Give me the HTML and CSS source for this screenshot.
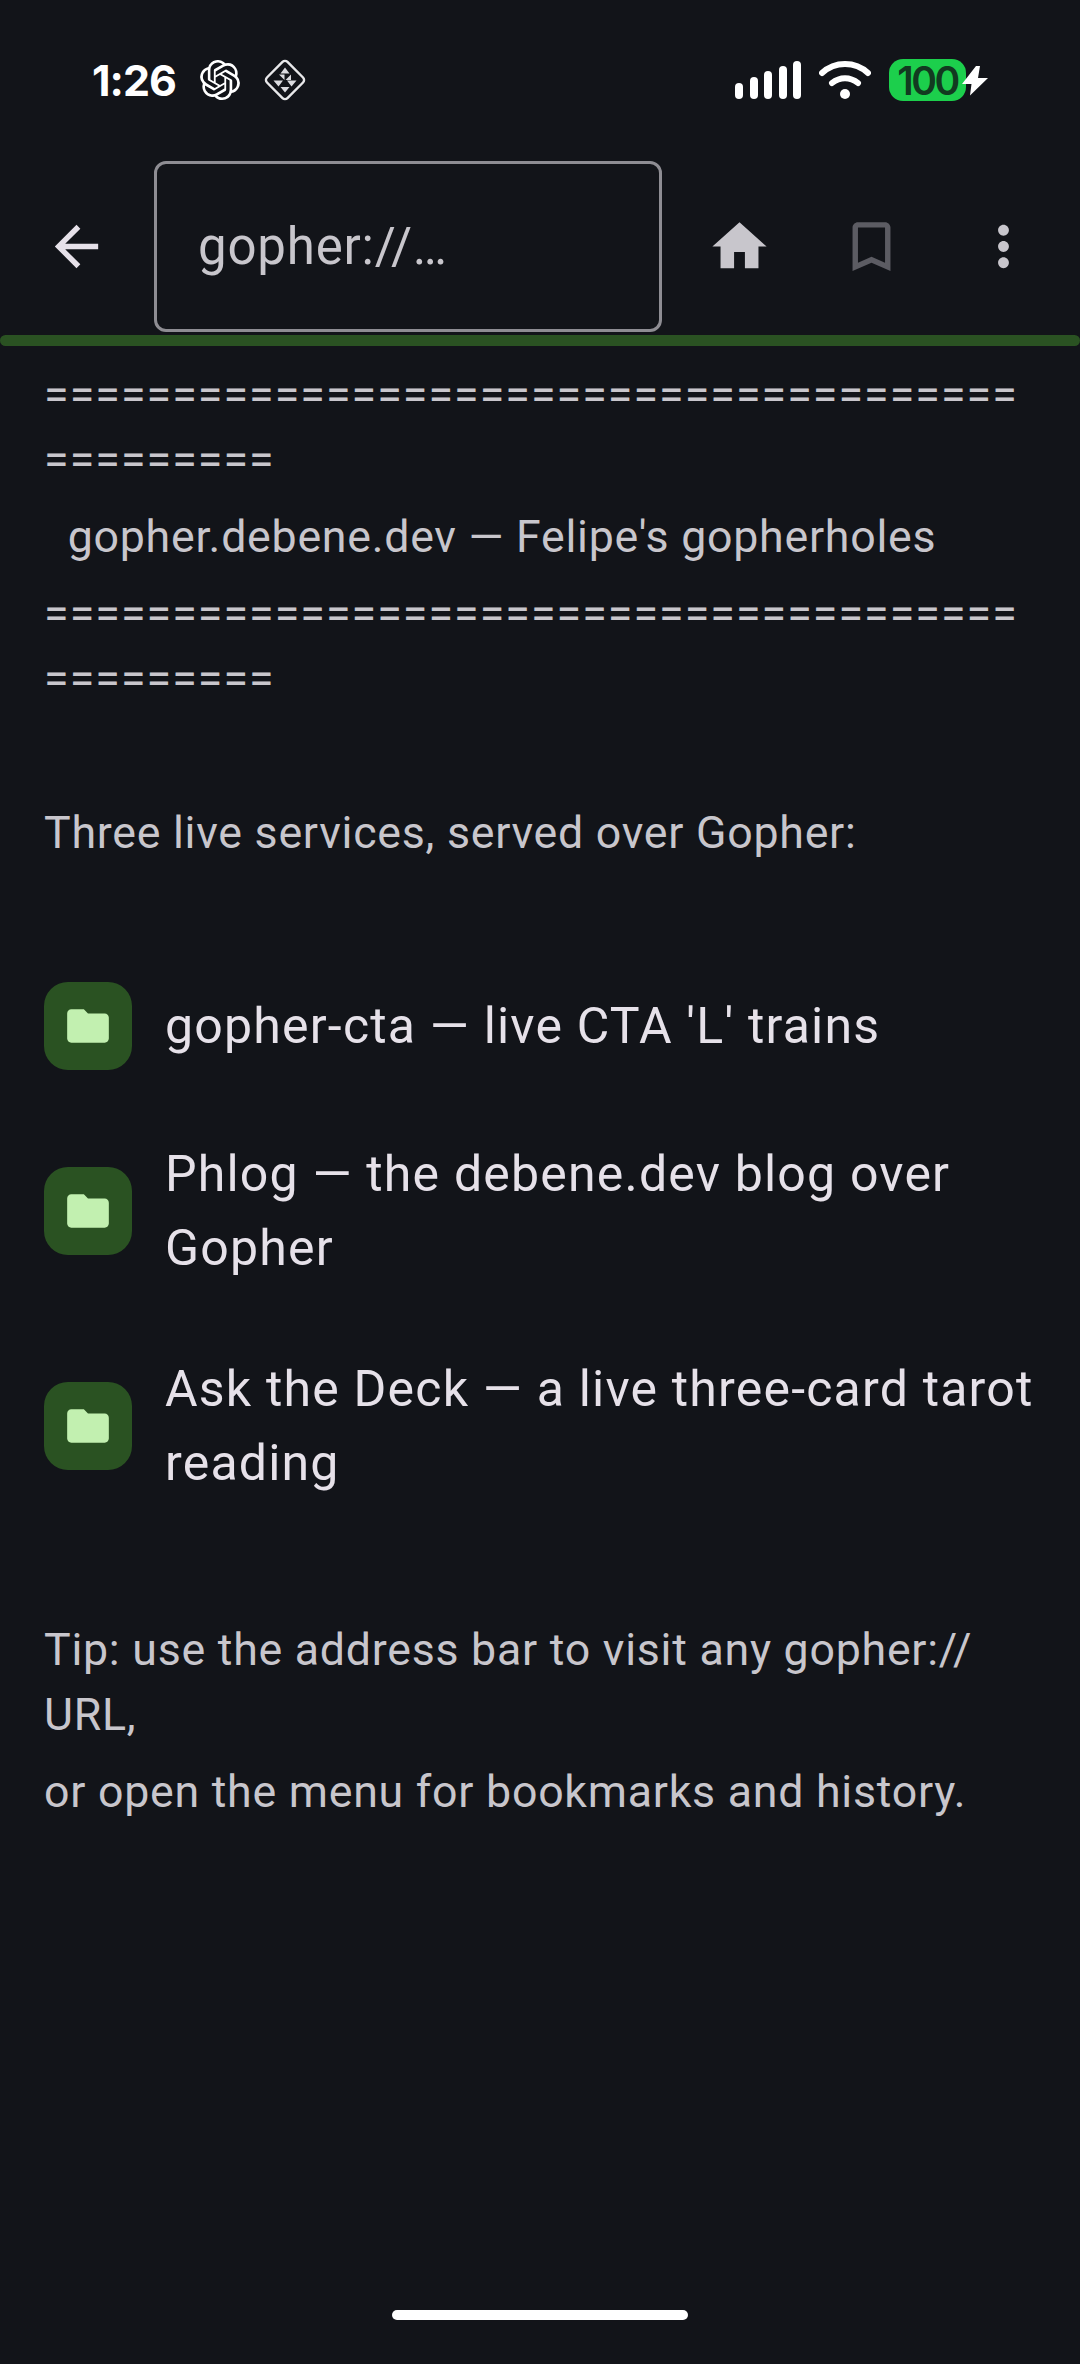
FILE: index.html
```html
<!DOCTYPE html>
<html lang="en">
<head>
  <meta charset="UTF-8" />
  <title>Gopher browser</title>
  <meta name="viewport" content="width=device-width, initial-scale=1.0"/>
  <link rel="stylesheet" href="styles.css">
</head>
<body>
  <div class="status-bar">
    <div class="status-left">
      <span class="time">1:26</span>
      <svg class="openai-icon" viewBox="0 0 24 24"><path fill="#fff" d="M22.2819 9.8211a5.9847 5.9847 0 0 0-.5157-4.9108 6.0462 6.0462 0 0 0-6.5098-2.9A6.0651 6.0651 0 0 0 4.9807 4.1818a5.9847 5.9847 0 0 0-3.9977 2.9 6.0462 6.0462 0 0 0 .7427 7.0966 5.9847 5.9847 0 0 0 .511 4.9107 6.051 6.051 0 0 0 6.5146 2.9001A5.9847 5.9847 0 0 0 13.2599 24a6.0557 6.0557 0 0 0 5.7718-4.2058 5.9894 5.9894 0 0 0 3.9977-2.9001 6.0557 6.0557 0 0 0-.7475-7.0729zm-9.022 12.6081a4.4755 4.4755 0 0 1-2.8764-1.0408l.1419-.0804 4.7783-2.7582a.7948.7948 0 0 0 .3927-.6813v-6.7369l2.02 1.1686a.071.071 0 0 1 .038.052v5.5826a4.504 4.504 0 0 1-4.4945 4.4944zm-9.6607-4.1254a4.4708 4.4708 0 0 1-.5346-3.0137l.142.0852 4.783 2.7582a.7712.7712 0 0 0 .7806 0l5.8428-3.3685v2.3324a.0804.0804 0 0 1-.0332.0615L9.74 19.9502a4.4992 4.4992 0 0 1-6.1408-1.6464zM2.3408 7.8956a4.485 4.485 0 0 1 2.3655-1.9728V11.6a.7664.7664 0 0 0 .3879.6765l5.8144 3.3543-2.0201 1.1685a.0757.0757 0 0 1-.071 0l-4.8303-2.7865A4.504 4.504 0 0 1 2.3408 7.872zm16.5963 3.8558L13.1038 8.364 15.1192 7.2a.0757.0757 0 0 1 .071 0l4.8303 2.7913a4.4944 4.4944 0 0 1-.6765 8.1042v-5.6772a.79.79 0 0 0-.407-.667zm2.0107-3.0231l-.142-.0852-4.7735-2.7818a.7759.7759 0 0 0-.7854 0L9.409 9.2297V6.8974a.0662.0662 0 0 1 .0284-.0615l4.8303-2.7866a4.4992 4.4992 0 0 1 6.6802 4.66zM8.3065 12.863l-2.02-1.1638a.0804.0804 0 0 1-.038-.0567V6.0742a4.4992 4.4992 0 0 1 7.3757-3.4537l-.142.0805L8.704 5.459a.7948.7948 0 0 0-.3927.6813zm1.0976-2.3654l2.602-1.4998 2.6069 1.4998v2.9994l-2.5974 1.4997-2.6067-1.4997Z"/></svg>
      <svg class="diamond-icon" viewBox="0 0 42 42">
        <rect x="6.500" y="6.500" width="29" height="29" rx="3.500" transform="rotate(45 21 21)" fill="none" stroke="#e8e8ea" stroke-width="2.400"/>
        <path fill="#dcdce0" d="M21 8.500l4.500 6h-9zM15 15.500h5.500v5.500zM27 15.500v5.500h-5.500zM9.500 21.500h9.500l-4.500 6zM32.500 21.500H23l4.500 6zM16.500 28h9L21 33.500z"/>
      </svg>
    </div>
    <div class="status-right">
      <div class="signal">
        <span class="bar bar1"></span>
        <span class="bar bar2"></span>
        <span class="bar bar3"></span>
        <span class="bar bar4"></span>
        <span class="bar bar5"></span>
      </div>
      <svg class="wifi-icon" viewBox="0 0 52 40">
        <path d="M3 13C16 1 36 1 49 13" fill="none" stroke="#fff" stroke-width="6" stroke-linecap="round"/>
        <path d="M13 23c8-6.500 18-6.500 26 0" fill="none" stroke="#fff" stroke-width="6" stroke-linecap="round"/>
        <circle cx="26" cy="34" r="5" fill="#fff"/>
      </svg>
      <div class="battery">
        <span class="battery-level">100</span>
        <svg class="bolt-icon" viewBox="0 0 26 30"><path fill="#fff" d="M14 0L0 18h9.500L8 29.500 26 12H16L18 0z"/></svg>
      </div>
    </div>
  </div>

  <div class="toolbar">
    <button class="icon-btn back-btn">
      <svg viewBox="0 0 24 24"><path d="M20 11H7.830l5.590-5.590L12 4l-8 8 8 8 1.410-1.410L7.830 13H20v-2z"/></svg>
    </button>
    <div class="address">gopher://…</div>
    <button class="icon-btn home-btn">
      <svg viewBox="0 0 24 24"><path d="M10 20v-6h4v6h5v-8h3L12 3 2 12h3v8z"/></svg>
    </button>
    <button class="icon-btn bookmark-btn">
      <svg viewBox="0 0 24 24"><path d="M17 3H7c-1.100 0-2 .9-2 2v16l7-3 7 3V5c0-1.100-.9-2-2-2zm0 15l-5-2.180L7 18V5h10v13z"/></svg>
    </button>
    <button class="icon-btn menu-btn">
      <svg viewBox="0 0 24 24"><path d="M12 8c1.100 0 2-.9 2-2s-.9-2-2-2-2 .9-2 2 .9 2 2 2zm0 2c-1.100 0-2 .9-2 2s.9 2 2 2 2-.9 2-2-.9-2-2-2zm0 6c-1.100 0-2 .9-2 2s.9 2 2 2 2-.9 2-2-.9-2-2-2z"/></svg>
    </button>
  </div>
  <div class="progress"></div>

  <main class="content">
    <p class="line rule">===============================================</p>
    <p class="line">&nbsp;&nbsp;gopher.debene.dev — Felipe's gopherholes</p>
    <p class="line rule">===============================================</p>
    <div class="gap-intro"></div>
    <p class="line">Three live services, served over Gopher:</p>
    <div class="gap-list-top"></div>

    <div class="menu-item">
      <span class="folder-box"><svg viewBox="0 0 24 24"><path d="M10 4H4c-1.100 0-2 .9-2 2v12c0 1.100.9 2 2 2h16c1.100 0 2-.9 2-2V8c0-1.100-.9-2-2-2h-8l-2-2z"/></svg></span>
      <span class="item-text">gopher-cta — live CTA 'L' trains</span>
    </div>
    <div class="menu-item">
      <span class="folder-box"><svg viewBox="0 0 24 24"><path d="M10 4H4c-1.100 0-2 .9-2 2v12c0 1.100.9 2 2 2h16c1.100 0 2-.9 2-2V8c0-1.100-.9-2-2-2h-8l-2-2z"/></svg></span>
      <span class="item-text">Phlog — the debene.dev blog over Gopher</span>
    </div>
    <div class="menu-item">
      <span class="folder-box"><svg viewBox="0 0 24 24"><path d="M10 4H4c-1.100 0-2 .9-2 2v12c0 1.100.9 2 2 2h16c1.100 0 2-.9 2-2V8c0-1.100-.9-2-2-2h-8l-2-2z"/></svg></span>
      <span class="item-text">Ask the Deck — a live three-card tarot reading</span>
    </div>

    <div class="gap-list-bottom"></div>
    <p class="line">Tip: use the address bar to visit any gopher:// URL,</p>
    <p class="line">or open the menu for bookmarks and history.</p>
  </main>

  <div class="home-indicator"></div>
</body>
</html>
```

FILE: styles.css
```css
* {
  box-sizing: border-box;
}
body {
  margin: 0;
  min-height: 100vh;
  background: #121419;
  font-family: Roboto, sans-serif;
  color: #c8c6cc;
  display: flex;
  flex-direction: column;
}
.status-bar {
  height: 161px;
  padding: 59px 114px 0 92px;
  display: flex;
  justify-content: space-between;
  align-items: flex-start;
}
.status-left {
  display: flex;
  align-items: center;
  gap: 24px;
  height: 42px;
}
.time {
  font-family: Inter, sans-serif;
  font-size: 43px;
  font-weight: 700;
  color: #fff;
  width: 84px;
  letter-spacing: -1px;
}
.openai-icon {
  width: 40px;
  height: 40px;
}
.diamond-icon {
  width: 42px;
  height: 42px;
}
.status-right {
  display: flex;
  align-items: center;
  gap: 18px;
  height: 42px;
}
.signal {
  display: flex;
  align-items: flex-end;
  gap: 6.5px;
  height: 38px;
}
.bar {
  width: 8px;
  background: #fff;
  border-radius: 4px;
}
.bar1 { height: 16px; }
.bar2 { height: 22px; }
.bar3 { height: 28px; }
.bar4 { height: 33px; }
.bar5 { height: 38px; }
.wifi-icon {
  width: 52px;
  height: 40px;
}
.battery {
  position: relative;
  width: 77px;
  height: 42px;
  background: #1ccf4c;
  border-radius: 14px;
  display: flex;
  align-items: center;
  justify-content: center;
}
.battery-level {
  font-family: Inter, sans-serif;
  font-size: 39px;
  font-weight: 600;
  color: #123a20;
  letter-spacing: -2.5px;
}
.bolt-icon {
  position: absolute;
  left: 73px;
  top: 7px;
  width: 26px;
  height: 30px;
}
.toolbar {
  height: 171px;
  display: flex;
  align-items: center;
  padding-left: 154px;
  position: relative;
}
.icon-btn {
  width: 65px;
  height: 65px;
  padding: 0;
  border: none;
  background: none;
}
.icon-btn svg {
  display: block;
  width: 65px;
  height: 65px;
  fill: #c8c6cc;
}
.back-btn {
  position: absolute;
  left: 44px;
  top: 53px;
}
.back-btn svg {
  fill: #e6e1e9;
}
.bookmark-btn svg {
  fill: #5c5c63;
}
.address {
  width: 508px;
  height: 171px;
  margin-right: 45px;
  border: 3px solid #8e8d93;
  border-radius: 12px;
  padding-left: 41px;
  display: flex;
  align-items: center;
  font-size: 51px;
  letter-spacing: 0.8px;
  color: #c8c6cc;
}
.home-btn {
  margin-right: 67px;
}
.bookmark-btn {
  margin-right: 67px;
}
.progress {
  height: 11px;
  margin-top: 3px;
  background: #2a5222;
  border-radius: 6px;
}
.content {
  flex: 1;
  padding: 13px 44px 0 44px;
}
.line {
  margin: 0;
  padding: 4px 0 8px;
  font-size: 44.7px;
  line-height: 65px;
  letter-spacing: 0.75px;
  overflow-wrap: anywhere;
  color: #c8c6cc;
}
.rule {
  letter-spacing: 1.1px;
}
.gap-intro {
  height: 77px;
}
.gap-list-top {
  height: 74px;
}
.gap-list-bottom {
  height: 81px;
}
.menu-item {
  display: flex;
  align-items: center;
  gap: 33px;
  padding: 33.5px 0;
}
.folder-box {
  flex: none;
  width: 88px;
  height: 88px;
  background: #2a5222;
  border-radius: 24px;
  display: flex;
  align-items: center;
  justify-content: center;
}
.folder-box svg {
  width: 50px;
  height: 50px;
  fill: #c2f0b0;
}
.item-text {
  font-size: 50px;
  line-height: 74px;
  letter-spacing: 1.2px;
  color: #e6e1e9;
}
.home-indicator {
  flex: none;
  align-self: center;
  width: 296px;
  height: 10px;
  margin-bottom: 44px;
  background: #fff;
  border-radius: 5px;
}
```
